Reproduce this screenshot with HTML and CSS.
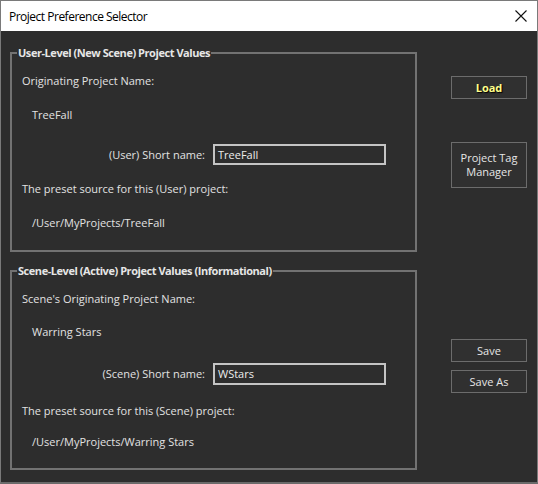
FILE: index.html
```html
<!DOCTYPE html>
<html>
<head>
<meta charset="utf-8">
<link rel="stylesheet" href="styles.css">
</head>
<body>
<div class="window">
  <div class="titlebar">
    <span class="title">Project Preference Selector</span>
    <svg class="close" width="12" height="12" viewBox="0 0 12 12"><path d="M0.5 0.5 L11.5 11.5 M11.5 0.5 L0.5 11.5" stroke="#111" stroke-width="1.1" fill="none"/></svg>
  </div>
  <div class="body">
    <div class="groups">
      <fieldset class="group g1">
        <legend>User-Level (New Scene) Project Values</legend>
        <div class="row r1">Originating Project Name:</div>
        <div class="row r2 indent">TreeFall</div>
        <div class="row r3 field">
          <span class="flabel">(User) Short name:</span>
          <span class="input">TreeFall</span>
        </div>
        <div class="row r4">The preset source for this (User) project:</div>
        <div class="row r5 indent">/User/MyProjects/TreeFall</div>
      </fieldset>
      <fieldset class="group g2">
        <legend>Scene-Level (Active) Project Values (Informational)</legend>
        <div class="row r1">Scene's Originating Project Name:</div>
        <div class="row r2 indent">Warring Stars</div>
        <div class="row r3 field">
          <span class="flabel">(Scene) Short name:</span>
          <span class="input">WStars</span>
        </div>
        <div class="row r4">The preset source for this (Scene) project:</div>
        <div class="row r5 indent">/User/MyProjects/Warring Stars</div>
      </fieldset>
    </div>
    <div class="buttons">
      <div class="btn load">Load</div>
      <div class="btn tag">Project Tag<br>Manager</div>
      <div class="spacer"></div>
      <div class="btn save">Save</div>
      <div class="btn saveas">Save As</div>
    </div>
  </div>
</div>
</body>
</html>
```
FILE: styles.css
```css
html, body {
  margin: 0;
  padding: 0;
  background: #2d2d2d;
}
body {
  font-family: "Open Sans", "Noto Sans", sans-serif;
  font-size: 11px;
  color: #e2e2e2;
}
.window {
  width: 538px;
  height: 484px;
  box-sizing: border-box;
  border: 1px solid #7a7a7a;
  border-bottom: 2px solid #6a6a6a;
  display: flex;
  flex-direction: column;
  background: #2d2d2d;
}
.titlebar {
  height: 30px;
  background: #ffffff;
  display: flex;
  align-items: center;
  justify-content: space-between;
  padding: 0 10px 0 8px;
  flex: none;
}
.title {
  font-size: 12px;
  letter-spacing: -0.5px;
  color: #000;
}
.body {
  flex: 1;
  display: flex;
}
.groups {
  width: 417px;
  padding-left: 9px;
  padding-top: 15px;
  box-sizing: border-box;
}
.group {
  margin: 0;
  padding: 0 0 0 10px;
  border: 2px solid #727272;
  width: 407px;
  box-sizing: border-box;
  min-inline-size: 0;
}
.g1 { height: 206px; }
.g2 { height: 206px; margin-top: 12px; }
.group legend {
  font-weight: 700;
  color: #e6e6e6;
  padding: 0 1px;
  margin-left: -5px;
  line-height: 14px;
  letter-spacing: -0.45px;
}
.row {
  height: 20px;
  line-height: 20px;
  white-space: nowrap;
}
.indent { padding-left: 10px; }
.g1 .r1 { margin-top: 11px; }
.g1 .r2 { margin-top: 14px; }
.g1 .r3 { margin-top: 19px; height: 21px; }
.g1 .r4 { margin-top: 14px; }
.g1 .r5 { margin-top: 14px; }
.g2 .r1 { margin-top: 11px; }
.g2 .r2 { margin-top: 13px; }
.g2 .r3 { margin-top: 21px; }
.g2 .r4 { margin-top: 16px; }
.g2 .r5 { margin-top: 11px; }
.field {
  display: flex;
  align-items: center;
  height: 22px;
  margin-left: -10px;
}
.flabel {
  width: 193px;
  text-align: right;
}
.input {
  margin-left: 8px;
  width: 173px;
  height: 100%;
  box-sizing: border-box;
  border: 2px solid #c4c4c4;
  line-height: 16px;
  padding-left: 3px;
  color: #ececec;
  display: flex;
  align-items: center;
}
.buttons {
  flex: 1;
  display: flex;
  flex-direction: column;
  align-items: flex-start;
  padding-left: 33px;
  padding-top: 45px;
}
.btn {
  width: 76px;
  box-sizing: border-box;
  border: 1px solid #6c6c6c;
  background: #303030;
  text-align: center;
  color: #e6e6e6;
}
.load {
  height: 23px;
  line-height: 21px;
  font-weight: 700;
  color: #ffff8a;
  text-shadow: 1px 1px 1px #000;
}
.tag {
  margin-top: 43px;
  height: 46px;
  line-height: 14px;
  padding-top: 8px;
}
.spacer { height: 151px; }
.save, .saveas {
  height: 23px;
  line-height: 21px;
}
.saveas { margin-top: 8px; }
```
